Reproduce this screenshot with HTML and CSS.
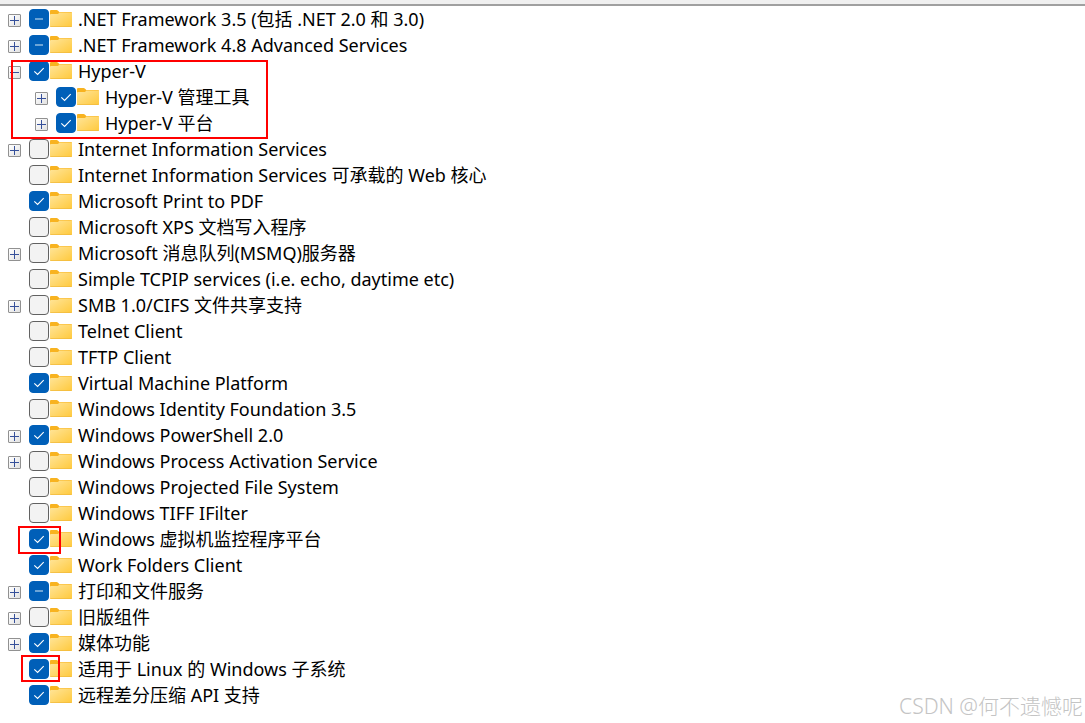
FILE: index.html
```
<!DOCTYPE html>
<html lang="zh-CN">
  <head>
    <meta charset="UTF-8" />
    <title>Windows 功能</title>
    <link rel="stylesheet" href="styles.css">
  </head>
  <body>
    <svg class="defs" aria-hidden="true">
      <defs>
        <linearGradient id="folderFill" x1="0" y1="0" x2="1" y2="1">
          <stop offset="0" stop-color="#ffe59a" />
          <stop offset="1" stop-color="#ffc93c" />
        </linearGradient>
        <symbol id="folder" viewBox="0 0 22 17">
          <path d="M0 1Q0 0 1 0H6.6Q7.3 0 7.8 .6L9.3 2H21Q22 2 22 3V6H0Z" fill="#f8b320" />
          <path d="M0 5Q0 4 1 4H7.3Q8 4 8.5 3.4L9.2 2.6H21.4Q22 2.6 22 3.2V16.2Q22 17 21.2 17H.8Q0 17 0 16.2Z" fill="url(#folderFill)" />
          <path d="M.3 16.6H21.7" stroke="#f0b93c" stroke-width=".8" />
        </symbol>
      </defs>
    </svg>
    <main class="features">
      <ul class="tree">
        <li>
          <div class="row"><button class="toggle" type="button" aria-label="展开"></button><input type="checkbox" id="f1" class="partial" /><svg class="folder"><use href="#folder" /></svg><label for="f1">.NET Framework 3.5 (包括 .NET 2.0 和 3.0)</label></div>
        </li>
        <li>
          <div class="row"><button class="toggle" type="button" aria-label="展开"></button><input type="checkbox" id="f2" class="partial" /><svg class="folder"><use href="#folder" /></svg><label for="f2">.NET Framework 4.8 Advanced Services</label></div>
        </li>
        <li>
          <div class="row"><button class="toggle open" type="button" aria-label="折叠"></button><input type="checkbox" id="f3" checked /><svg class="folder"><use href="#folder" /></svg><label for="f3">Hyper-V</label></div>
          <ul>
            <li>
              <div class="row"><button class="toggle" type="button" aria-label="展开"></button><input type="checkbox" id="f4" checked /><svg class="folder"><use href="#folder" /></svg><label for="f4">Hyper-V 管理工具</label></div>
            </li>
            <li>
              <div class="row"><button class="toggle" type="button" aria-label="展开"></button><input type="checkbox" id="f5" checked /><svg class="folder"><use href="#folder" /></svg><label for="f5">Hyper-V 平台</label></div>
            </li>
          </ul>
          <span class="mark mark-group"></span>
        </li>
        <li>
          <div class="row"><button class="toggle" type="button" aria-label="展开"></button><input type="checkbox" id="f6" /><svg class="folder"><use href="#folder" /></svg><label for="f6">Internet Information Services</label></div>
        </li>
        <li>
          <div class="row"><input type="checkbox" id="f7" /><svg class="folder"><use href="#folder" /></svg><label for="f7">Internet Information Services 可承载的 Web 核心</label></div>
        </li>
        <li>
          <div class="row"><input type="checkbox" id="f8" checked /><svg class="folder"><use href="#folder" /></svg><label for="f8">Microsoft Print to PDF</label></div>
        </li>
        <li>
          <div class="row"><input type="checkbox" id="f9" /><svg class="folder"><use href="#folder" /></svg><label for="f9">Microsoft XPS 文档写入程序</label></div>
        </li>
        <li>
          <div class="row"><button class="toggle" type="button" aria-label="展开"></button><input type="checkbox" id="f10" /><svg class="folder"><use href="#folder" /></svg><label for="f10">Microsoft 消息队列(MSMQ)服务器</label></div>
        </li>
        <li>
          <div class="row"><input type="checkbox" id="f11" /><svg class="folder"><use href="#folder" /></svg><label for="f11">Simple TCPIP services (i.e. echo, daytime etc)</label></div>
        </li>
        <li>
          <div class="row"><button class="toggle" type="button" aria-label="展开"></button><input type="checkbox" id="f12" /><svg class="folder"><use href="#folder" /></svg><label for="f12">SMB 1.0/CIFS 文件共享支持</label></div>
        </li>
        <li>
          <div class="row"><input type="checkbox" id="f13" /><svg class="folder"><use href="#folder" /></svg><label for="f13">Telnet Client</label></div>
        </li>
        <li>
          <div class="row"><input type="checkbox" id="f14" /><svg class="folder"><use href="#folder" /></svg><label for="f14">TFTP Client</label></div>
        </li>
        <li>
          <div class="row"><input type="checkbox" id="f15" checked /><svg class="folder"><use href="#folder" /></svg><label for="f15">Virtual Machine Platform</label></div>
        </li>
        <li>
          <div class="row"><input type="checkbox" id="f16" /><svg class="folder"><use href="#folder" /></svg><label for="f16">Windows Identity Foundation 3.5</label></div>
        </li>
        <li>
          <div class="row"><button class="toggle" type="button" aria-label="展开"></button><input type="checkbox" id="f17" checked /><svg class="folder"><use href="#folder" /></svg><label for="f17">Windows PowerShell 2.0</label></div>
        </li>
        <li>
          <div class="row"><button class="toggle" type="button" aria-label="展开"></button><input type="checkbox" id="f18" /><svg class="folder"><use href="#folder" /></svg><label for="f18">Windows Process Activation Service</label></div>
        </li>
        <li>
          <div class="row"><input type="checkbox" id="f19" /><svg class="folder"><use href="#folder" /></svg><label for="f19">Windows Projected File System</label></div>
        </li>
        <li>
          <div class="row"><input type="checkbox" id="f20" /><svg class="folder"><use href="#folder" /></svg><label for="f20">Windows TIFF IFilter</label></div>
        </li>
        <li>
          <div class="row"><input type="checkbox" id="f21" checked /><svg class="folder"><use href="#folder" /></svg><label for="f21">Windows 虚拟机监控程序平台</label></div>
          <span class="mark mark-hypervisor"></span>
        </li>
        <li>
          <div class="row"><input type="checkbox" id="f22" checked /><svg class="folder"><use href="#folder" /></svg><label for="f22">Work Folders Client</label></div>
        </li>
        <li>
          <div class="row"><button class="toggle" type="button" aria-label="展开"></button><input type="checkbox" id="f23" class="partial" /><svg class="folder"><use href="#folder" /></svg><label for="f23">打印和文件服务</label></div>
        </li>
        <li>
          <div class="row"><button class="toggle" type="button" aria-label="展开"></button><input type="checkbox" id="f24" /><svg class="folder"><use href="#folder" /></svg><label for="f24">旧版组件</label></div>
        </li>
        <li>
          <div class="row"><button class="toggle" type="button" aria-label="展开"></button><input type="checkbox" id="f25" checked /><svg class="folder"><use href="#folder" /></svg><label for="f25">媒体功能</label></div>
        </li>
        <li>
          <div class="row"><input type="checkbox" id="f26" checked /><svg class="folder"><use href="#folder" /></svg><label for="f26">适用于 Linux 的 Windows 子系统</label></div>
          <span class="mark mark-wsl"></span>
        </li>
        <li>
          <div class="row"><input type="checkbox" id="f27" checked /><svg class="folder"><use href="#folder" /></svg><label for="f27">远程差分压缩 API 支持</label></div>
        </li>
      </ul>
    </main>
    <div class="watermark">CSDN @何不遗憾呢</div>
    <script>
      document.querySelectorAll(".partial").forEach((box) => {
        box.indeterminate = true;
      });
    </script>
  </body>
</html>
```
FILE: styles.css
```
* {
  box-sizing: border-box;
}
body {
  margin: 0;
  background: #fff;
  color: #000;
  font-family: "Noto Sans", "Noto Sans CJK SC", sans-serif;
  font-size: 18px;
  line-height: 26px;
}
.defs {
  position: absolute;
  width: 0;
  height: 0;
}
.features {
  border-top: 4px solid #f0f0f0;
}
.tree {
  border-top: 2px solid #a0a0a0;
}
ul {
  list-style: none;
  margin: 0;
  padding: 0;
}
ul ul {
  padding-left: 27px;
}
li {
  position: relative;
}
.row {
  display: grid;
  grid-template-columns: 13px 20px 22px auto;
  justify-content: start;
  align-items: center;
  height: 26px;
  padding-left: 8px;
}
.toggle {
  grid-column: 1;
  width: 13px;
  height: 13px;
  margin: 2px 0 0;
  padding: 0;
  border: 1px solid #919191;
  border-radius: 1px;
  background:
    linear-gradient(#36509a, #36509a) center / 9px 1px no-repeat,
    linear-gradient(#36509a, #36509a) center / 1px 9px no-repeat,
    linear-gradient(135deg, #fff, #e2e2e2);
}
.toggle.open {
  background:
    linear-gradient(#36509a, #36509a) center / 9px 1px no-repeat,
    linear-gradient(135deg, #fff, #e2e2e2);
}
input[type="checkbox"] {
  grid-column: 2;
  appearance: none;
  width: 20px;
  height: 20px;
  margin: 0 0 0 8px;
  border: 1px solid #626262;
  border-radius: 4px;
  background: #f3f3f3;
}
input[type="checkbox"]:checked,
input[type="checkbox"]:indeterminate {
  border-color: #005fb8;
  background: #005fb8 center / 20px 20px no-repeat;
}
input[type="checkbox"]:checked {
  background-image: url("data:image/svg+xml,%3Csvg xmlns='http://www.w3.org/2000/svg' viewBox='0 0 20 20'%3E%3Cpath d='M5.3 10.3L8.6 13.5L14.7 7.2' fill='none' stroke='white' stroke-width='1.1'/%3E%3C/svg%3E");
}
input[type="checkbox"]:indeterminate {
  background-image: url("data:image/svg+xml,%3Csvg xmlns='http://www.w3.org/2000/svg' viewBox='0 0 20 20'%3E%3Cpath d='M6 10H14' stroke='%2390bbe0' stroke-width='1.6'/%3E%3C/svg%3E");
}
.folder {
  grid-column: 3;
  width: 22px;
  height: 17px;
  margin: 0 0 1px 9px;
}
label {
  grid-column: 4;
  margin-left: 15px;
  white-space: nowrap;
}
/* red highlight frames over the tree */
.mark {
  position: absolute;
  z-index: 1;
  border: 2px solid #ff0000;
  pointer-events: none;
}
.mark-group {
  top: 2px;
  left: 11px;
  width: 257px;
  height: 79px;
}
.mark-hypervisor {
  top: 0;
  left: 18px;
  width: 43px;
  height: 28px;
}
.mark-wsl {
  top: -1px;
  left: 21px;
  width: 39px;
  height: 27px;
}
.watermark {
  position: absolute;
  right: 2px;
  bottom: 3px;
  color: #c4c4c4;
  font-size: 21px;
  font-weight: 300;
  line-height: 28px;
}
```
